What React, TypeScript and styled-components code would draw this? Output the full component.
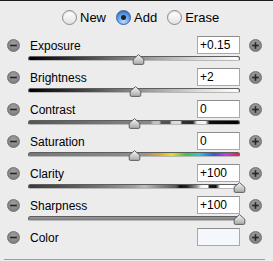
import React from 'react';
import styled, { createGlobalStyle, css } from 'styled-components';

const Global = createGlobalStyle`
  html, body {
    margin: 0;
    padding: 0;
    background: #ececec;
  }
  body {
    font-family: "Liberation Sans", Arial, sans-serif;
    color: #000;
  }
`;

const Panel = styled.div`
  width: 273px;
  height: 261px;
  box-sizing: border-box;
  border-top: 1px solid #1c1c1c;
  background: #ececec;
  display: flex;
  flex-direction: column;
  & > * {
    flex-shrink: 0;
  }
`;

const ModeBar = styled.div`
  height: 35px;
  box-sizing: border-box;
  padding: 0 0 2px 62px;
  display: flex;
  align-items: center;
  gap: 10px;
`;

const Option = styled.label`
  display: flex;
  align-items: center;
  gap: 3px;
  font-size: 13px;
`;

const Radio = styled.span<{ $on?: boolean }>`
  width: 15px;
  height: 15px;
  box-sizing: border-box;
  border-radius: 50%;
  display: flex;
  align-items: center;
  justify-content: center;
  border: 1px solid #8a8a8a;
  background: linear-gradient(#ffffff, #f2f2f2 50%, #e2e2e2);
  box-shadow: inset 0 1px 1px rgba(0, 0, 0, 0.15);
  ${(p) =>
    p.$on &&
    css`
      border-color: #3d5f94;
      background: radial-gradient(circle at 50% 80%, #b9dcff, #6aa6ea 45%, #2f6fcb 100%);
      &::after {
        content: '';
        width: 5px;
        height: 5px;
        border-radius: 50%;
        background: #1c2430;
      }
    `}
`;

const Row = styled.div<{ $bare?: boolean }>`
  display: grid;
  grid-template-columns: 28px 212px 1fr;
  grid-template-rows: ${(p) => (p.$bare ? '18px' : '18px 14px')};
  align-items: center;
`;

const Round = styled.span<{ $side: 'left' | 'right' }>`
  width: 13px;
  height: 13px;
  border-radius: 50%;
  box-sizing: border-box;
  margin-left: ${(p) => (p.$side === 'left' ? '7px' : '9px')};
  background: radial-gradient(circle at 50% 35%, #a0a0a0, #858585 65%, #737373);
  border: 1px solid #727272;
  display: flex;
  align-items: center;
  justify-content: center;
`;

const Header = styled.div`
  display: flex;
  align-items: center;
  justify-content: space-between;
  padding-left: 2px;
  height: 18px;
`;

const Label = styled.span`
  font-size: 12px;
  padding-top: 1px;
`;

const ValueBox = styled.div<{ $swatch?: boolean }>`
  width: 43px;
  height: 18px;
  box-sizing: border-box;
  border: 1px solid #a9a9a9;
  border-top-color: #8c8c8c;
  background: ${(p) => (p.$swatch ? '#f4f8fd' : '#ffffff')};
  font-size: 12px;
  line-height: 16px;
  padding-left: 2px;
`;

type Kind = 'tone' | 'contrast' | 'saturation' | 'clarity' | 'flat';

const trackFills: Record<Kind, string> = {
  tone: 'linear-gradient(90deg, #000 0%, #333 20%, #8a8a8a 50%, #d8d8d8 80%, #fff 100%)',
  contrast:
    'linear-gradient(90deg, #555 0%, #7a7a7a 40%, #8a8a8a 58%, #bdbdbd 59%, #c4c4c4 62%, #555 63%, #505050 67%, #d8d8d8 68%, #e0e0e0 72%, #333 73%, #2a2a2a 78%, #f0f0f0 80%, #f6f6f6 84%, #111 86%, #000 100%)',
  saturation:
    'linear-gradient(90deg, #777 0%, #8a8a8a 45%, #a8927a 56%, #e0a23c 62%, #e6dc2a 68%, #3fc43f 75%, #2fc6d8 81%, #2f57e8 88%, #c43fd8 94%, #e8204a 100%)',
  clarity:
    'linear-gradient(90deg, #3a3a3a 0%, #555 18%, #777 35%, #a0a0a0 50%, #bdbdbd 55%, #8a8a8a 62%, #5a5a5a 70%, #111 72%, #222 75%, #9a9a9a 80%, #f4f4f4 82%, #ffffff 85%, #1a1a1a 86%, #111 89%, #ffffff 91%, #ffffff 97%, #999 100%)',
  flat: 'linear-gradient(#9a9a9a, #8a8a8a 50%, #7c7c7c)',
};

const Slider = styled.div`
  grid-column: 2;
  position: relative;
  height: 14px;
  align-self: start;
`;

const Track = styled.div<{ $kind: Kind }>`
  margin-top: 2px;
  height: 5px;
  box-sizing: border-box;
  border-radius: 3px;
  border: 1px solid #5e5e5e;
  border-bottom-color: #b8b8b8;
  background: ${(p) => trackFills[p.$kind]};
`;

const Thumb = styled.svg<{ $at: number }>`
  position: absolute;
  top: 0;
  left: ${(p) => p.$at - 6}px;
  width: 13px;
  height: 11px;
  overflow: visible;
`;

const Divider = styled.div`
  margin: 13px 8px 0 4px;
  height: 1px;
  background: #9c9c9c;
`;

const MinusIcon = () => (
  <svg width="9" height="9" viewBox="0 0 9 9">
    <rect x="1.2" y="3.7" width="6.6" height="1.6" fill="#262626" />
  </svg>
);

const PlusIcon = () => (
  <svg width="9" height="9" viewBox="0 0 9 9">
    <rect x="1.2" y="3.7" width="6.6" height="1.6" fill="#262626" />
    <rect x="3.7" y="1.2" width="1.6" height="6.6" fill="#262626" />
  </svg>
);

const ThumbShape = ({ at }: { at: number }) => (
  <Thumb $at={at} viewBox="0 0 13 11">
    <defs>
      <linearGradient id="thumbFill" x1="0" y1="0" x2="0" y2="1">
        <stop offset="0" stopColor="#f4f4f4" />
        <stop offset="0.5" stopColor="#d0d0d0" />
        <stop offset="1" stopColor="#a8a8a8" />
      </linearGradient>
    </defs>
    <path
      d="M6.5 0.6 L11.8 5.2 L11.8 9.2 Q11.8 10.4 10.6 10.4 L2.4 10.4 Q1.2 10.4 1.2 9.2 L1.2 5.2 Z"
      fill="url(#thumbFill)"
      stroke="#555"
      strokeWidth="0.9"
      strokeLinejoin="round"
    />
  </Thumb>
);

type Setting = { name: string; value: string; kind?: Kind; at?: number };

const settings: Setting[] = [
  { name: 'Exposure', value: '+0.15', kind: 'tone', at: 110 },
  { name: 'Brightness', value: '+2', kind: 'tone', at: 107 },
  { name: 'Contrast', value: '0', kind: 'contrast', at: 106 },
  { name: 'Saturation', value: '0', kind: 'saturation', at: 106 },
  { name: 'Clarity', value: '+100', kind: 'clarity', at: 211 },
  { name: 'Sharpness', value: '+100', kind: 'flat', at: 211 },
  { name: 'Color', value: '' },
];

export default function App() {
  return (
    <>
      <Global />
      <Panel>
        <ModeBar>
          <Option>
            <Radio />
            New
          </Option>
          <Option>
            <Radio $on />
            Add
          </Option>
          <Option>
            <Radio />
            Erase
          </Option>
        </ModeBar>
        {settings.map((s) => (
          <Row key={s.name} $bare={!s.kind}>
            <Round $side="left">
              <MinusIcon />
            </Round>
            <Header>
              <Label>{s.name}</Label>
              <ValueBox $swatch={!s.kind}>{s.value}</ValueBox>
            </Header>
            <Round $side="right">
              <PlusIcon />
            </Round>
            {s.kind && (
              <Slider>
                <Track $kind={s.kind} />
                <ThumbShape at={s.at ?? 0} />
              </Slider>
            )}
          </Row>
        ))}
        <Divider />
      </Panel>
    </>
  );
}
